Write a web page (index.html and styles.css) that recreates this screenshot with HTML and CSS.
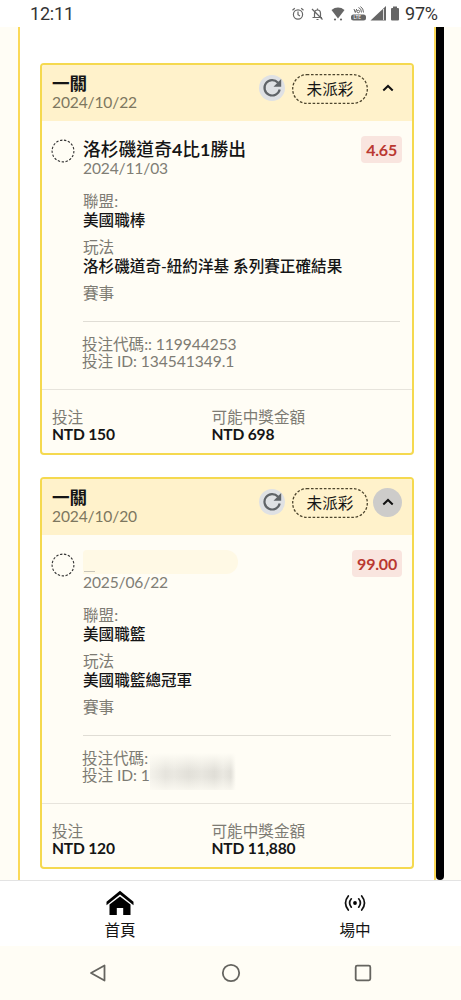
FILE: index.html
```
<!DOCTYPE html>
<html lang="zh-Hant">
<head>
<meta charset="utf-8">
<title>投注紀錄</title>
<link rel="stylesheet" href="styles.css">
</head>
<body>
<header class="status">
  <span class="clock">12:11</span>
  <svg class="status-icons" width="110" height="18" viewBox="0 0 110 18">
    <g fill="none" stroke="#666" stroke-width="1.2">
      <circle cx="7" cy="9.5" r="4.6"/><path d="M7 6.5v3.2l2 1.2M1.5 5.3l2.3-2M12.5 5.3l-2.3-2"/>
      <path d="M21.500 12.500h9.500M23.500 12V8.500c0-2 1-3.500 3-3.500s3 1.500 3 3.500v3.500M21 4l10.500 10.500M25.500 14.500h2M26.500 3.500v1"/>
    </g>
    <g fill="#666">
      <path d="M40.500 5c4-3.300 9-3.300 13 0L47 13.500z"/><circle cx="44" cy="14.500" r="1.100"/><circle cx="50" cy="14.500" r="1.100"/>
      <rect x="60" y="9.500" width="15" height="6" rx="2.500"/>
      <path d="M79.500 15.500L95 1v14.500z"/>
      <path d="M100 4q0-1 1-1h1V1.500h4V3h1q1 0 1 1v10.500q0 1-1 1h-6q-1 0-1-1z"/>
    </g>
    <path d="M92.500 4v11" stroke="#ddd"/>
    <path d="M63 4l1.300 3.500L65.700 4M67.500 2.500q3 1 3 5M69.500 1.500q3 2 3 6" fill="none" stroke="#666"/>
    <circle cx="67.300" cy="6.500" r="1.300" fill="none" stroke="#666"/>
    <text class="lte" x="62.500" y="14.300">LTE</text>
  </svg>
  <span class="battery">97%</span>
</header>

<div class="viewport">
  <main class="page">
    <article class="card">
      <div class="card-head">
        <div class="head-text"><h2>一關</h2><p class="date">2024/10/22</p></div>
        <button class="refresh"><svg width="20" height="20" viewBox="0 0 20 20"><path d="M16 4.700A7.700 7.700 0 1 0 17.700 11.500" fill="none" stroke="#606468" stroke-width="2.200"/><path d="M19.200 1v7.700h-7.700z" fill="#606468"/></svg></button>
        <span class="tag"><svg class="dash" width="76" height="30"><rect x=".7" y=".7" width="74.600" height="28.600" rx="14"/></svg>未派彩</span>
        <button class="toggle"><svg width="12" height="8" viewBox="0 0 12 8"><path d="M1.300 6.500L6 2l4.700 4.500"/></svg></button>
      </div>
      <div class="card-body">
        <svg class="ring" width="24" height="24"><circle cx="12" cy="12" r="10.900"/></svg>
        <div class="detail">
          <div class="pick"><h3>洛杉磯道奇<b>4</b>比<b>1</b>勝出</h3><span class="odds">4.65</span></div>
          <p class="date">2024/11/03</p>
          <dl class="facts">
            <div><dt>聯盟:</dt><dd>美國職棒</dd></div>
            <div><dt>玩法</dt><dd>洛杉磯道奇-紐約洋基 系列賽正確結果</dd></div>
            <div><dt>賽事</dt></div>
          </dl>
          <div class="codes"><p>投注代碼:: 119944253</p><p>投注 ID: 134541349.1</p></div>
        </div>
      </div>
      <footer class="card-foot">
        <div><span>投注</span><strong>NTD 150</strong></div>
        <div><span>可能中獎金額</span><strong>NTD 698</strong></div>
      </footer>
    </article>

    <article class="card">
      <div class="card-head">
        <div class="head-text"><h2>一關</h2><p class="date">2024/10/20</p></div>
        <button class="refresh"><svg width="20" height="20" viewBox="0 0 20 20"><path d="M16 4.700A7.700 7.700 0 1 0 17.700 11.500" fill="none" stroke="#606468" stroke-width="2.200"/><path d="M19.200 1v7.700h-7.700z" fill="#606468"/></svg></button>
        <span class="tag"><svg class="dash" width="76" height="30"><rect x=".7" y=".7" width="74.600" height="28.600" rx="14"/></svg>未派彩</span>
        <button class="toggle pressed"><svg width="12" height="8" viewBox="0 0 12 8"><path d="M1.300 6.500L6 2l4.700 4.500"/></svg></button>
      </div>
      <div class="card-body">
        <svg class="ring" width="24" height="24"><circle cx="12" cy="12" r="10.900"/></svg>
        <div class="detail">
          <div class="pick"><div class="hidden-pick"></div><span class="odds">99.00</span></div>
          <p class="date">2025/06/22</p>
          <dl class="facts short">
            <div><dt>聯盟:</dt><dd>美國職籃</dd></div>
            <div><dt>玩法</dt><dd>美國職籃總冠軍</dd></div>
            <div><dt>賽事</dt></div>
          </dl>
          <div class="codes"><p>投注代碼:</p><p>投注 ID: 1</p><div class="smudge"></div></div>
        </div>
      </div>
      <footer class="card-foot">
        <div><span>投注</span><strong>NTD 120</strong></div>
        <div><span>可能中獎金額</span><strong>NTD 11,880</strong></div>
      </footer>
    </article>
  </main>
  <div class="scrollbar"></div>
</div>

<nav class="tabs">
  <a class="tab">
    <svg width="28" height="26" viewBox="0 0 28 26"><path d="M.5 11.700L14 .7l13.500 11v3.600L14 4.500.5 15.300z"/><path d="M3.500 14.500L14 6.500l10.500 8V25h-7.300v-7h-6.400v7H3.500z"/></svg>
    <span>首頁</span>
  </a>
  <a class="tab">
    <svg width="22" height="26" viewBox="0 0 22 26"><g fill="none" stroke="#111" stroke-width="1.700" stroke-linecap="round"><path d="M4.300 6Q-1.300 13 4.300 20M17.700 6q5.600 7 0 14M7.300 8.800q-3.400 4.200 0 8.400M14.700 8.800q3.400 4.200 0 8.400"/></g><circle cx="11" cy="13" r="1.900"/></svg>
    <span>場中</span>
  </a>
</nav>

<div class="system">
  <svg width="18" height="20" viewBox="0 0 18 20"><path d="M15.500 2.500v15L2 10z"/></svg>
  <svg width="20" height="20" viewBox="0 0 20 20"><circle cx="10" cy="10" r="8.200"/></svg>
  <svg width="18" height="20" viewBox="0 0 18 20"><rect x="1.700" y="2.700" width="14.600" height="14.600" rx="1.500"/></svg>
</div>
</body>
</html>
```
FILE: styles.css
```
* { box-sizing: border-box; }
body, h2, h3, p, dl, dd { margin: 0; }
body {
  width: 461px;
  height: 1000px;
  overflow: hidden;
  display: flex;
  flex-direction: column;
  background: #fff;
  color: #151515;
  font: 15.6px/18px Lato, "Noto Sans CJK TC", sans-serif;
}
svg { display: block; flex: none; }
button { border: 0; padding: 0; background: none; }

.status {
  height: 27px;
  display: flex;
  align-items: center;
  padding: 1px 23px 0 30px;
  color: #333;
  font: 18px/24px Roboto, sans-serif;
}
.clock { flex: 1; letter-spacing: -.2px; }
.status-icons { margin-right: 4px; }
.battery { letter-spacing: -.2px; width: 33px; white-space: nowrap; }
.lte { font: bold 4.5px Roboto, sans-serif; fill: #ddd; }

.viewport {
  height: 853px;
  display: flex;
  background: #fffdf5;
  padding-left: 18px;
}
.page {
  width: 418px;
  background: #fff;
  border: solid #fbd957;
  border-width: 0 2px;
  padding: 35.500px 20px 0;
}
.scrollbar { width: 8px; background: #000; border-radius: 0 0 4px 4px; }

.card {
  width: 374px;
  height: 392px;
  margin-bottom: 22px;
  border: 2px solid #f5d94f;
  border-radius: 4px;
  background: #fffdf5;
  overflow: hidden;
}
.card-head {
  height: 56.500px;
  padding: 9px 10px 0;
  display: flex;
  background: #fff2cb;
}
.head-text { flex: 1; }
h2 { font-size: 17.600px; font-weight: 700; line-height: 20px; }
.date { color: #807e75; letter-spacing: -.15px; line-height: 18px; }
.head-text .date { color: #7d775f; margin-top: -1px; }
.refresh {
  width: 26px;
  height: 26px;
  margin: 1.500px 7px 0 0;
  border-radius: 50%;
  background: #dfe1e4;
  display: grid;
  place-items: center;
}
.tag {
  position: relative;
  width: 76px;
  height: 30px;
  margin-right: 5px;
  text-align: center;
  line-height: 31px;
}
.dash { position: absolute; left: 0; top: 0; }
.dash rect { fill: none; stroke: #4d452d; stroke-width: 1.300; stroke-dasharray: 2.600 1.700; }
.toggle {
  width: 29px;
  height: 29px;
  border-radius: 50%;
  display: grid;
  place-items: center;
}
.toggle path { fill: none; stroke: #111; stroke-width: 2; }
.pressed { background: #cdccca; }

.card-body { height: 268px; display: flex; padding: 15px 10px 0 9px; }
.ring { margin: 3px 8px 0 0; }
.ring circle { fill: none; stroke: #333; stroke-width: 1.100; stroke-dasharray: 2.400 1.600; }
.detail { flex: 1; }
.pick { height: 23px; display: flex; justify-content: space-between; }
h3 { font-size: 17.800px; font-weight: 500; line-height: 27px; white-space: nowrap; }
.odds {
  height: 27px;
  padding: 0 5px;
  border-radius: 4px;
  background: #f9e5df;
  color: #ba3831;
  font-size: 16px;
  letter-spacing: -.2px;
  font-weight: 700;
  line-height: 28px;
}
.hidden-pick {
  width: 155px;
  height: 24px;
  border-radius: 4px 12px 12px 0;
  background: linear-gradient(#c7c4b8, #c7c4b8) 1px 21px / 11px 1px no-repeat #fff9e5;
}
.facts { height: 145px; margin: 0 2px 14px 0; padding-top: 14.500px; border-bottom: 1px solid #e0ddd5; }
.short { margin-right: 11px; }
.facts > div { height: 46px; }
dt { color: #7d7b73; line-height: 19px; }
dd { font-weight: 500; line-height: 18px; white-space: nowrap; }
.codes { position: relative; color: #7d7b73; margin-left: -1px; line-height: 17px; letter-spacing: -.06px; }
.codes p { height: 17px; }
.smudge {
  position: absolute;
  left: 68px;
  top: 3px;
  width: 86px;
  height: 37px;
  background:
    linear-gradient(#fffdf5 0%, transparent 50%, transparent 65%, rgba(255, 253, 245, .75)),
    linear-gradient(90deg, #f4f2eb, #e6e4dd 18%, #eae8e1 28%, #e2e0d9 45%, #e8e6df 60%, #e0ded7 75%, #eae8e1 85%, #e2e0d9 94%, #fffdf5);
}
.card-foot {
  height: 64px;
  display: grid;
  grid-template-columns: 159.500px 1fr;
  padding: 18.500px 10px 0;
  border-top: 1px solid #e7e4dc;
}
.card-foot span, .card-foot strong { display: block; line-height: 17px; }
.card-foot strong { letter-spacing: -.2px; }
.card-foot span { color: #7d7b73; }

.tabs {
  height: 66px;
  border-top: 1px solid #e3e3e3;
  display: flex;
  justify-content: space-between;
  padding: 9px 2px 0 2px;
}
.tab { width: 236px; display: flex; flex-direction: column; align-items: center; }
.tab + .tab { width: 208px; }
.tab span { margin-top: 5px; }

.system {
  height: 54px;
  display: flex;
  justify-content: space-between;
  align-items: center;
  padding: 0 89px;
  background: #fffdf5;
}
.system svg { fill: none; stroke: #65645f; stroke-width: 1.800; stroke-linejoin: round; }
```
